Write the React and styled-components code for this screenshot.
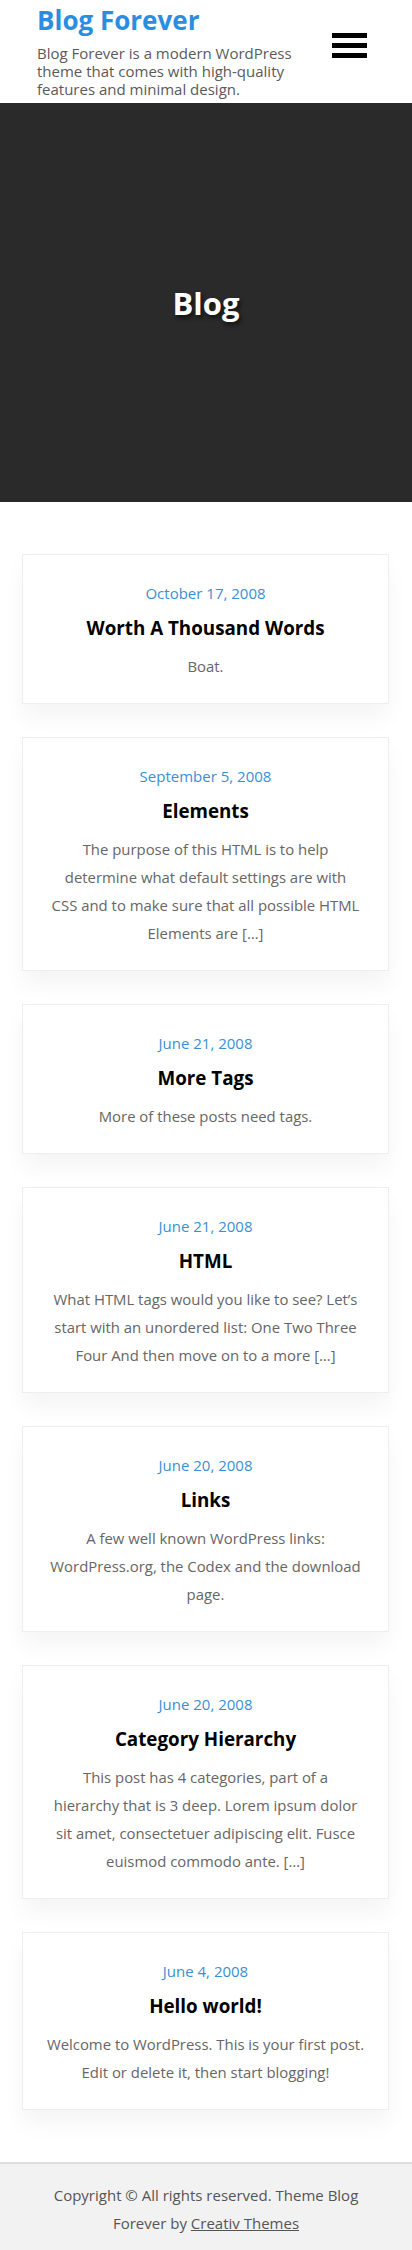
import { Fragment } from "react";
import styled, { createGlobalStyle } from "styled-components";

const posts = [
  {
    date: "October 17, 2008",
    title: "Worth A Thousand Words",
    excerpt: ["Boat."],
  },
  {
    date: "September 5, 2008",
    title: "Elements",
    excerpt: [
      "The purpose of this HTML is to help",
      "determine what default settings are with",
      "CSS and to make sure that all possible HTML",
      "Elements are […]",
    ],
  },
  {
    date: "June 21, 2008",
    title: "More Tags",
    excerpt: ["More of these posts need tags."],
  },
  {
    date: "June 21, 2008",
    title: "HTML",
    excerpt: [
      "What HTML tags would you like to see? Let’s",
      "start with an unordered list: One Two Three",
      "Four And then move on to a more […]",
    ],
  },
  {
    date: "June 20, 2008",
    title: "Links",
    excerpt: [
      "A few well known WordPress links:",
      "WordPress.org, the Codex and the download",
      "page.",
    ],
  },
  {
    date: "June 20, 2008",
    title: "Category Hierarchy",
    excerpt: [
      "This post has 4 categories, part of a",
      "hierarchy that is 3 deep. Lorem ipsum dolor",
      "sit amet, consectetuer adipiscing elit. Fusce",
      "euismod commodo ante. […]",
    ],
  },
  {
    date: "June 4, 2008",
    title: "Hello world!",
    excerpt: [
      "Welcome to WordPress. This is your first post.",
      "Edit or delete it, then start blogging!",
    ],
  },
];

export default function App() {
  return (
    <>
      <GlobalStyle />
      <StyledHeader>
        <StyledBrand>
          <StyledSiteTitle href="#">Blog Forever</StyledSiteTitle>
          <StyledTagline>
            Blog Forever is a modern WordPress theme that comes with
            high-quality features and minimal design.
          </StyledTagline>
        </StyledBrand>
        <StyledMenuButton aria-label="Menu">
          <span />
          <span />
          <span />
        </StyledMenuButton>
      </StyledHeader>

      <StyledHero>
        <StyledHeroTitle>Blog</StyledHeroTitle>
      </StyledHero>

      <StyledMain>
        {posts.map((post) => (
          <StyledCard key={post.title}>
            <StyledDate>{post.date}</StyledDate>
            <StyledPostTitle>{post.title}</StyledPostTitle>
            <StyledExcerpt>
              {post.excerpt.map((line, i) => (
                <Fragment key={i}>
                  {i > 0 && <br />}
                  {line}
                </Fragment>
              ))}
            </StyledExcerpt>
          </StyledCard>
        ))}
      </StyledMain>

      <StyledFooter>
        <StyledFooterText>
          Copyright © All rights reserved. Theme Blog Forever by{" "}
          <a href="#">Creativ Themes</a>
        </StyledFooterText>
      </StyledFooter>
    </>
  );
}

const GlobalStyle = createGlobalStyle`
  * {
    box-sizing: border-box;
  }
  body {
    margin: 0;
    background: #ffffff;
    font-family: "Open Sans", "Noto Sans", sans-serif;
    color: #555555;
  }
`;

const StyledHeader = styled.header`
  display: flex;
  justify-content: space-between;
  align-items: flex-start;
  height: 103px;
  padding: 4px 45px 0 37px;
  background: #ffffff;
`;

const StyledBrand = styled.div`
  display: flex;
  flex-direction: column;
  width: 275px;
`;

const StyledSiteTitle = styled.a`
  font-size: 26px;
  line-height: 32px;
  font-weight: 700;
  color: #2b8de0;
  text-decoration: none;
`;

const StyledTagline = styled.p`
  margin: 8px 0 0;
  font-size: 15px;
  line-height: 18px;
  color: #5a5a5a;
`;

const StyledMenuButton = styled.button`
  display: flex;
  flex-direction: column;
  gap: 5px;
  width: 35px;
  margin-top: 29px;
  padding: 0;
  border: 0;
  background: none;

  span {
    display: block;
    height: 5px;
    background: #000000;
  }
`;

const StyledHero = styled.section`
  display: flex;
  align-items: center;
  justify-content: center;
  height: 399px;
  background: #2a2a2a;
`;

const StyledHeroTitle = styled.h1`
  margin: 0;
  font-size: 31px;
  font-weight: 700;
  color: #ffffff;
  text-shadow: 2px 3px 4px rgba(0, 0, 0, 0.6);
`;

const StyledMain = styled.main`
  display: flex;
  flex-direction: column;
  gap: 33px;
  padding: 52px 23px 52px 22px;
`;

const StyledCard = styled.article`
  display: flex;
  flex-direction: column;
  align-items: center;
  padding: 27px 12px 23px;
  border: 1px solid #eeeeee;
  background: #ffffff;
  text-align: center;
  box-shadow: 0 14px 22px rgba(0, 0, 0, 0.045);
`;

const StyledDate = styled.span`
  font-size: 15px;
  line-height: 22px;
  color: #3a8fd3;
`;

const StyledPostTitle = styled.h2`
  margin: 10px 0 0;
  font-size: 18.8px;
  line-height: 28px;
  font-weight: 700;
  color: #000000;
`;

const StyledExcerpt = styled.p`
  margin: 10px 0 0;
  font-size: 14.9px;
  line-height: 28px;
  color: #666666;
  white-space: nowrap;
`;

const StyledFooter = styled.footer`
  border-top: 2px solid #dddddd;
  background: #f2f2f2;
  padding: 17px 45px 16px;
  text-align: center;
`;

const StyledFooterText = styled.p`
  margin: 0;
  font-size: 15px;
  line-height: 28px;
  color: #555555;

  a {
    color: #555555;
    text-decoration: underline;
  }
`;
